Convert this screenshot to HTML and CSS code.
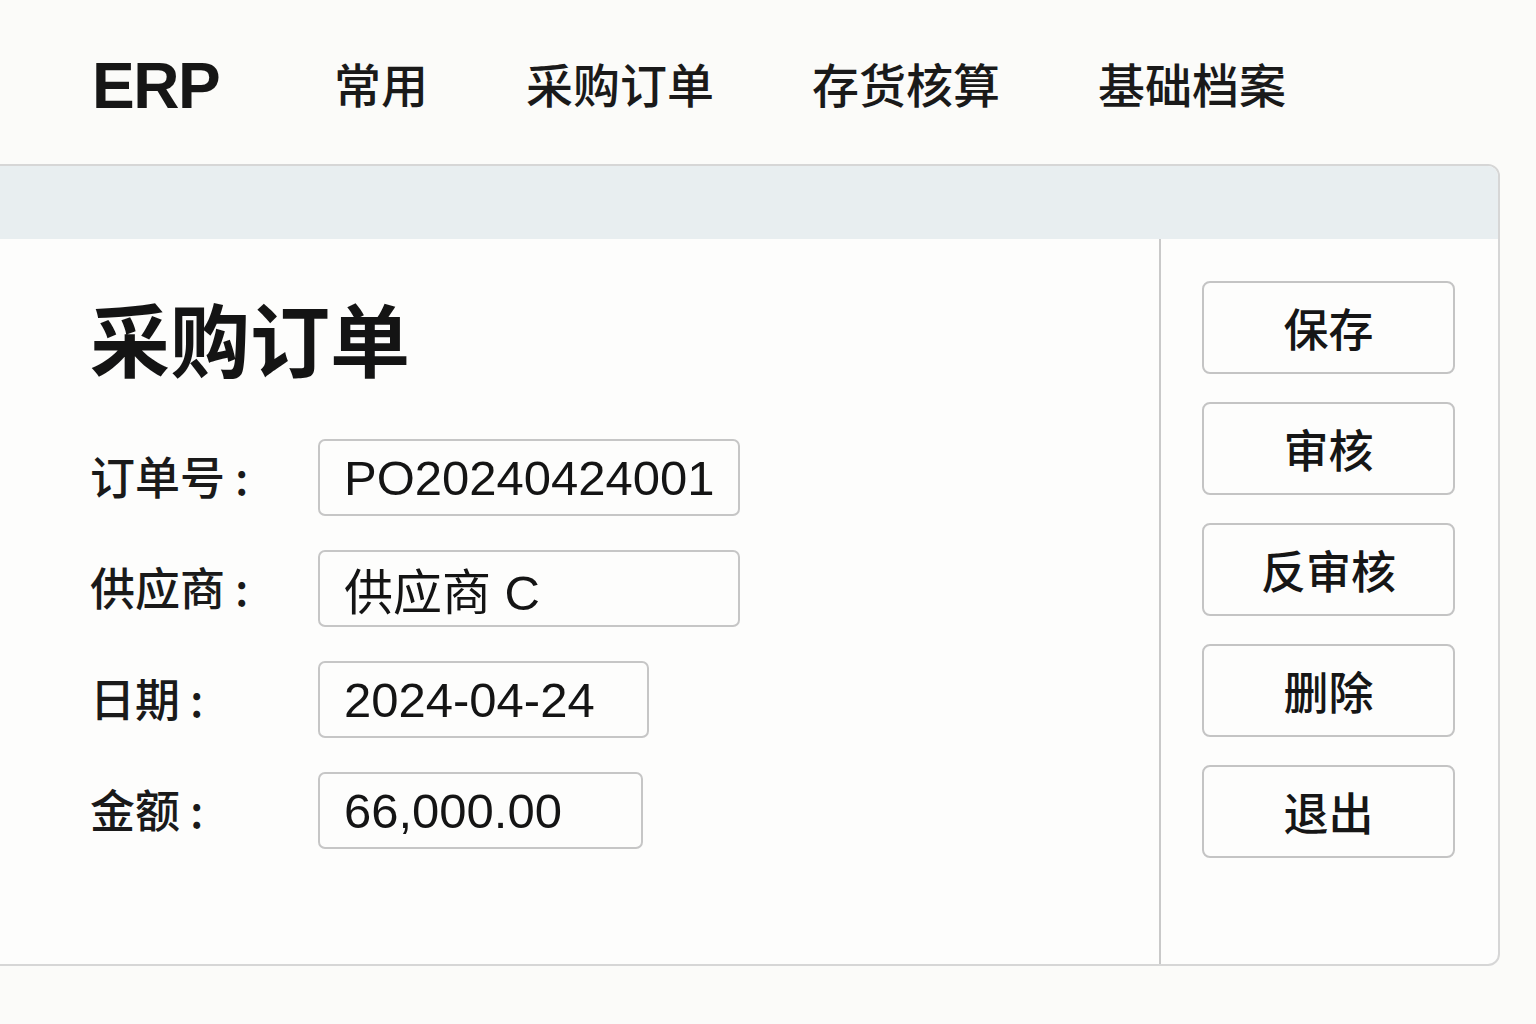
FILE: index.html
```html
<!DOCTYPE html>
<html lang="zh-CN">
<head>
<meta charset="utf-8">
<title>ERP - 采购订单</title>
<link rel="stylesheet" href="styles.css">
</head>
<body>
<header class="topbar">
  <div class="logo">ERP</div>
  <nav class="menu">
    <a class="menu-item">常用</a>
    <a class="menu-item">采购订单</a>
    <a class="menu-item">存货核算</a>
    <a class="menu-item">基础档案</a>
  </nav>
</header>
<section class="panel">
  <div class="panel-head"></div>
  <div class="panel-body">
    <div class="form-area">
      <h1 class="title">采购订单</h1>
      <div class="form-grid">
        <label class="label">订单号<span class="colon">:</span></label>
        <div class="field field-wide">PO20240424001</div>
        <label class="label">供应商<span class="colon">:</span></label>
        <div class="field field-wide">供应商 C</div>
        <label class="label">日期<span class="colon">:</span></label>
        <div class="field field-date">2024-04-24</div>
        <label class="label">金额<span class="colon">:</span></label>
        <div class="field field-amount">66,000.00</div>
      </div>
    </div>
    <aside class="actions">
      <button class="btn">保存</button>
      <button class="btn">审核</button>
      <button class="btn">反审核</button>
      <button class="btn">删除</button>
      <button class="btn">退出</button>
    </aside>
  </div>
</section>
</body>
</html>
```
FILE: styles.css
```css
html, body {
  margin: 0;
  padding: 0;
}
body {
  width: 1536px;
  height: 1024px;
  overflow: hidden;
  background: #fbfbf9;
  color: #161616;
  font-family: "Liberation Sans", "Noto Sans CJK SC", sans-serif;
}
.topbar {
  height: 156px;
  padding-top: 8px;
  padding-left: 92px;
  display: flex;
  align-items: center;
}
.logo {
  width: 242px;
  font-size: 64px;
  font-weight: 700;
  letter-spacing: -1.5px;
  transform-origin: left center;
}
.menu {
  display: flex;
  gap: 98px;
  margin-top: -8px;
}
.menu-item {
  font-family: "Noto Sans CJK SC", sans-serif;
  font-size: 47px;
  font-weight: 500;
  color: #1a1a1a;
}
.panel {
  margin-left: -10px;
  width: 1506px;
  height: 798px;
  border: 2px solid #d6d6d6;
  border-radius: 0 12px 12px 0;
  background: #fdfdfc;
  overflow: hidden;
  display: flex;
  flex-direction: column;
}
.panel-head {
  height: 73px;
  background: #e8eef0;
  flex: none;
}
.panel-body {
  flex: 1;
  display: flex;
}
.form-area {
  width: 1069px;
  padding-left: 98px;
  border-right: 2px solid #c9c9c9;
}
.title {
  margin: 57px 0 0;
  font-family: "Noto Sans CJK SC", sans-serif;
  font-size: 80px;
  line-height: 80px;
  font-weight: 700;
  color: #141414;
}
.form-grid {
  margin-top: 63px;
  display: grid;
  grid-template-columns: 228px auto;
  row-gap: 34px;
  align-items: center;
  justify-items: start;
}
.label {
  font-family: "Noto Sans CJK SC", sans-serif;
  font-size: 45px;
  font-weight: 500;
  color: #1a1a1a;
  margin-top: -4px;
}
.colon {
  margin-left: 10px;
}
.field {
  box-sizing: border-box;
  height: 77px;
  padding-left: 24px;
  border: 2px solid #c6c6c6;
  border-radius: 7px;
  background: #fdfdfc;
  display: flex;
  align-items: center;
  font-family: "Liberation Sans", "Noto Sans CJK SC", sans-serif;
  font-size: 49px;
  color: #141414;
}
.field-wide { width: 422px; }
.field-date { width: 331px; }
.field-amount { width: 325px; }
.actions {
  flex: 1;
  padding: 42px 0 0 41px;
  display: flex;
  flex-direction: column;
  gap: 28px;
}
.btn {
  box-sizing: border-box;
  width: 253px;
  height: 93px;
  border: 2px solid #c4c4c4;
  border-radius: 8px;
  background: #fdfdfc;
  font-family: "Noto Sans CJK SC", sans-serif;
  font-size: 45px;
  font-weight: 500;
  color: #161616;
  padding: 0;
}
```
